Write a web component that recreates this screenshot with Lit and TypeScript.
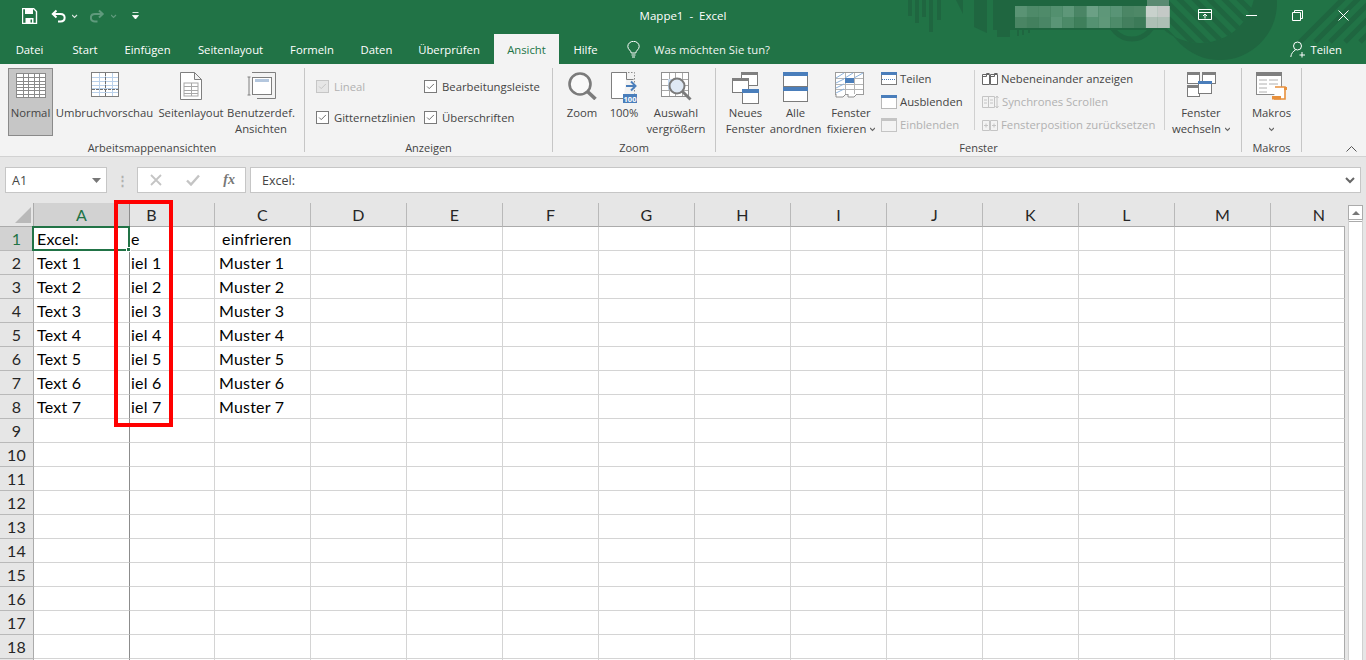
import { LitElement, html, css, svg } from "lit";
import { customElement } from "lit/decorators.js";

const GRAY = "#7b7b7b";
const BLUE = "#4a7ebb";
const DIS = "#c4c4c4";

// draws nx/ny inner lines of a table
const table = (x: number, y: number, w: number, h: number, nx: number, ny: number, c: string) => {
  let d = "";
  for (let i = 1; i < nx; i++) d += `M${x + Math.round((w * i) / nx) + 0.5} ${y}v${h}`;
  for (let i = 1; i < ny; i++) d += `M${x} ${y + Math.round((h * i) / ny) + 0.5}h${w}`;
  return svg`<path d=${d} stroke=${c} fill="none" />`;
};

const win = (x: number, y: number, w: number, h: number, bar: string, bh = 3, stroke = GRAY) => svg`
  <rect x=${x + 0.5} y=${y + 0.5} width=${w - 1} height=${h - 1} fill="#fff" stroke=${stroke} />
  <rect x=${x} y=${y} width=${w} height=${bh} fill=${bar} />`;

const icons = {
  save: html`<svg width="29" height="16" viewBox="0 0 29 16"><path d="M.5.500h11l3 3v12H.5z" fill="none" stroke="#fff" stroke-width="1.400"/><path d="M3 1h8v5H3zM3.500 10h8v6h-8z" fill="#fff"/><path d="M8.500 11.500h1.500v3H8.500z" fill="#217346"/></svg>`,
  undo: html`<svg width="21" height="16" viewBox="0 0 21 16"><path d="M5.500 2.500L1.800 6l3.700 3.500M2 6h7.500c5.500 0 5.500 7.500 0 7.500H7" fill="none" stroke="#fff" stroke-width="2"/></svg>`,
  redo: html`<svg width="21" height="16" viewBox="0 0 21 16"><path d="M9 2.500L12.700 6 9 9.500M12.500 6H5C-.5 6-.5 13.500 5 13.500h2.500" fill="none" stroke="#5f9a7c" stroke-width="2"/></svg>`,
  caretW: (w: number, c: string) => html`<svg width=${w} height="16" viewBox="0 0 ${w} 16"><path d="M0 7l2.500 2.500L5 7" fill="none" stroke=${c} stroke-width="1.200"/></svg>`,
  custom: html`<svg width="14" height="16" viewBox="0 0 14 16"><path d="M1.500 4.500h6M1.500 7.500h6l-3 3.500z" fill="#fff" stroke="#fff" stroke-width=".8"/></svg>`,
  ribbon: html`<svg width="14" height="12" viewBox="0 0 14 12"><path d="M.5.500h13v10H.500zM1 3.500h12M7 9.500V5M5 7l2-2 2 2" fill="none" stroke="#fff"/></svg>`,
  min: html`<svg width="11" height="11" viewBox="0 0 11 11"><path d="M0 5.500h11" stroke="#fff"/></svg>`,
  restore: html`<svg width="11" height="11" viewBox="0 0 11 11"><path d="M.5 2.500h8v8h-8zM2.500 2.500v-2h8v8h-2" fill="none" stroke="#fff"/></svg>`,
  close: html`<svg width="11" height="11" viewBox="0 0 11 11"><path d="M.5.500l10 10M10.500.5l-10 10" stroke="#fff"/></svg>`,
  bulb: html`<svg width="13" height="17" viewBox="0 0 13 17"><path d="M4.200 12c0-2.500-3.400-3.500-3.400-6.500a5.700 5.200 0 0 1 11.400 0c0 3-3.400 4-3.400 6.500zM4.500 14h4M5 16h3" fill="none" stroke="#fff"/></svg>`,
  person: html`<svg width="16" height="17" viewBox="0 0 16 17"><circle cx="7.500" cy="5" r="4" fill="none" stroke="#fff"/><path d="M.8 16c.3-3.500 2.500-6 4.700-7M12 11v5.500M9.500 14h5.500" fill="none" stroke="#fff"/></svg>`,
  normal: html`<svg width="30" height="25" viewBox="0 0 30 25"><rect width="30" height="25" fill="#8a8a8a"/><rect x="1" y="1" width="28" height="23" fill="#fff"/>${table(1, 1, 28, 23, 5, 7, "#8a8a8a")}</svg>`,
  pagebreak: html`<svg width="28" height="25" viewBox="0 0 28 25"><rect x=".5" y=".5" width="27" height="24" fill="#fff" stroke="#7f7f7f"/>${table(1, 1, 26, 23, 4, 6, "#b9d0ea")}<path d="M14.500 1v23M1 17.500h26" stroke="#6f6f6f" stroke-dasharray="3 1" fill="none"/></svg>`,
  page: html`<svg width="22" height="28" viewBox="0 0 22 28"><path d="M.5.500h14l7 7v20H.500zM14.500.5v7h7" fill="#fff" stroke="#7f7f7f"/><rect x="4" y="11" width="14" height="13" fill="#fff" stroke="#a8a8a8"/>${table(4, 11, 14, 13, 2, 4, "#a8a8a8")}</svg>`,
  custom2: html`<svg width="29" height="27" viewBox="0 0 29 27"><path d="M5 .5h23.500v26H10M.500 5h3M.5 23h3M2 5v18" fill="none" stroke="#7f7f7f"/><rect x="5.500" y="5.500" width="19" height="17" fill="#fff" stroke="#7f7f7f"/><rect x="8" y="7" width="14" height="3" fill="#b4c7de"/></svg>`,
  zoom: html`<svg width="29" height="28" viewBox="0 0 29 28"><circle cx="12" cy="12" r="10.500" fill="#fff" fill-opacity=".5" stroke=${GRAY} stroke-width="2.600"/><path d="M19.500 19.500l8 7.500" stroke=${GRAY} stroke-width="3.600"/></svg>`,
  hundred: html`<svg width="27" height="31" viewBox="0 0 27 31"><path d="M16 .5H.5v26h12" fill="#fff" stroke="#7f7f7f"/><path d="M15.500.5v7h7" fill="none" stroke="#7f7f7f"/><path d="M17 .5h6.500v21" fill="none" stroke="#8a8a8a" stroke-dasharray="1.500 1.500"/><path d="M15 14h9M20 9.500l4.500 4.500-4.500 4.500" fill="none" stroke=${BLUE} stroke-width="2"/><rect x="12" y="22" width="14" height="9" fill=${BLUE}/><text x="19" y="29.500" font-size="7.500" font-weight="700" text-anchor="middle" fill="#fff" font-family="Open Sans, sans-serif">100</text></svg>`,
  selzoom: html`<svg width="31" height="29" viewBox="0 0 31 29"><rect x=".5" y=".5" width="27" height="24" fill="#fff" stroke="#8f8f8f"/>${table(1, 1, 26, 23, 4, 4, "#a9a9a9")}<rect x="7" y="7" width="14" height="11" fill="#c6d9ee"/><circle cx="16" cy="14" r="7.500" fill="#dfe9f5" stroke=${GRAY} stroke-width="2"/><path d="M21.500 19.500l8 8" stroke=${GRAY} stroke-width="3"/></svg>`,
  newwin: html`<svg width="28" height="32" viewBox="0 0 28 32">${win(9, 0, 17, 14, "#7f7f7f")}${win(0, 6, 17, 15, "#7f7f7f")}${win(10, 17, 17, 15, BLUE, 4)}</svg>`,
  arrange: html`<svg width="25" height="30" viewBox="0 0 25 30">${win(0, 0, 25, 15, BLUE, 4)}${win(0, 15, 25, 15, BLUE, 4)}</svg>`,
  freeze: html`<svg width="32" height="27" viewBox="0 0 32 27"><rect x=".5" y=".5" width="28" height="22" fill="#fff" stroke="#9c9c9c"/>${table(1, 1, 27, 21, 3, 4, "#b5b5b5")}<path d="M1 6l8-5M10 6l8-5M19 6l9-5M1 11l8-4M1 16l8-4M1 21l8-4" stroke="#8cb2dc" fill="none"/><rect x="10" y="6" width="9" height="5" fill=${BLUE}/><path d="M1 22v3h7l3-3M13 22v3h6l3-3" fill="#fff" stroke="#8f8f8f"/></svg>`,
  split: html`<svg width="16" height="13" viewBox="0 0 16 13"><rect x=".5" y=".5" width="15" height="12" fill="#fff" stroke=${GRAY}/><rect width="16" height="3" fill=${BLUE}/><path d="M1 7.500h14" stroke=${BLUE} stroke-dasharray="1 1"/></svg>`,
  hide: html`<svg width="16" height="14" viewBox="0 0 16 14"><rect x=".5" y=".5" width="15" height="13" fill="#fff" stroke="#777" stroke-dasharray="1 1"/><rect width="16" height="3" fill=${BLUE}/></svg>`,
  unhide: html`<svg width="16" height="14" viewBox="0 0 16 14"><rect x=".5" y=".5" width="15" height="13" fill="#f3f3f3" stroke=${DIS}/><rect width="16" height="3" fill=${DIS}/></svg>`,
  sbs: html`<svg width="16" height="12" viewBox="0 0 16 12"><path d="M.5 1.500h7v10h-7zM8.500 1.500h7v10h-7zM.5 3.500h4V.5h3M8.500 3.500h4V.5h3" fill="#fff" stroke="#666"/></svg>`,
  sync: html`<svg width="17" height="14" viewBox="0 0 17 14"><path d="M.5 1.500h6v11h-6zM6.500 1.500h6v11h-6zM2 5h3M2 8h3M8 5h3M8 8h3M15 1v12M13.500 3L15 1l1.500 2M13.500 11l1.500 2 1.500-2" fill="none" stroke=${DIS}/></svg>`,
  reset: html`<svg width="16" height="12" viewBox="0 0 16 12"><path d="M.5 1.500h7v10h-7zM8.500 1.500h7v10h-7zM2 6.500h4M4 4.500v4M10 6.500h4M12 4.500v4" fill="none" stroke=${DIS}/></svg>`,
  switchwin: html`<svg width="29" height="25" viewBox="0 0 29 25">${win(0, 0, 13, 12, "#7f7f7f")}${win(15, 0, 14, 12, "#7f7f7f")}${win(0, 13, 13, 12, "#7f7f7f")}${win(11, 9, 14, 13, BLUE, 3)}</svg>`,
  macro: html`<svg width="31" height="28" viewBox="0 0 31 28"><rect x=".5" y=".5" width="25" height="22" fill="#fff" stroke="#8a8a8a"/><rect width="26" height="4" fill="#7f7f7f"/><path d="M3 8h8M13 8h9M3 12h8M13 12h9M3 16h8M3 20h8" stroke="#b0b0b0"/><path d="M19 15h10v12h-11" fill="#fff" stroke="#e8903c" stroke-width="1.600"/><path d="M16 24h9v3.500h-9z" fill="#e8903c"/><rect x="28" y="15" width="3" height="3" fill="#e8903c"/></svg>`,
  chevUp: html`<svg width="11" height="6" viewBox="0 0 11 6"><path d="M.5 5.500l5-5 5 5" fill="none" stroke="#555"/></svg>`,
  x: html`<svg width="12" height="12" viewBox="0 0 12 12"><path d="M1 1l10 10M11 1L1 11" stroke="#c4c4c4" stroke-width="1.800"/></svg>`,
  ok: html`<svg width="14" height="12" viewBox="0 0 14 12"><path d="M1 6.500l4 4 8-9" fill="none" stroke="#c4c4c4" stroke-width="2.400"/></svg>`,
};

const TABS: [string, number][] = [
  ["Datei", 53], ["Start", 58], ["Einfügen", 67], ["Seitenlayout", 99],
  ["Formeln", 64], ["Daten", 65], ["Überprüfen", 80],
];

const BLUR = [
  ["#5a9374", "#4e8a69", "#4f8b6a", "#53906f", "#5e9779", "#4a8565", "#6ba085", "#5e9779", "#599476", "#4b8665", "#4e8867", "#c8d1cc", "#c4c9c6"],
  ["#4a8564", "#43805e", "#4a8666", "#5a9576", "#4c8a68", "#3f7f5b", "#559272", "#5f9879", "#4e8b6a", "#437f5e", "#3c7a58", "#adbfb5", "#adbfb5"],
];

const COLS = "ABCDEFGHIJKLMN".split("");
const ROWS = Array.from({ length: 19 }, (_, i) => i + 1);

const cellText = (col: string, row: number) => {
  if (col === "A") return row === 1 ? "Excel:" : row <= 8 ? `Text ${row - 1}` : "";
  if (col === "B") return row === 1 ? "e" : row <= 8 ? `iel ${row - 1}` : "";
  if (col === "C") return row === 1 ? "einfrieren" : row <= 8 ? `Muster ${row - 1}` : "";
  return "";
};

@customElement("app-root")
export class AppRoot extends LitElement {
  static styles = css`
    :host {
      display: flex;
      flex-direction: column;
      position: relative;
      width: 1366px;
      height: 660px;
      overflow: hidden;
      font-family: "Open Sans", "Noto Sans", sans-serif;
      font-size: 11.3px;
      color: #444;
      background: #e6e6e6;
    }
    svg {
      display: block;
      flex: none;
    }

    /* title + tabs */
    .head {
      position: relative;
      height: 64px;
      flex: none;
      background: #217346;
      color: #fff;
      overflow: hidden;
    }
    .pattern {
      position: absolute;
      left: 0;
      top: 0;
    }
    .titlerow {
      position: relative;
      display: grid;
      grid-template-columns: 1fr auto 1fr;
      height: 34px;
    }
    .qat {
      display: flex;
      align-items: center;
      height: 32px;
      padding-left: 22px;
    }
    .title {
      line-height: 32px;
      font-size: 11.5px;
      white-space: pre;
    }
    .winbtns {
      display: flex;
      justify-content: flex-end;
    }
    .winbtn {
      width: 46px;
      height: 30px;
      display: flex;
      align-items: center;
      justify-content: center;
    }
    .tabs {
      position: relative;
      display: flex;
      height: 30px;
      padding-left: 3px;
    }
    .tab {
      display: flex;
      align-items: center;
      justify-content: center;
      flex: none;
    }
    .tab.active {
      width: 65px;
      margin-left: 5px;
      background: #f3f3f3;
      color: #217346;
    }
    .tab.help {
      width: 53px;
    }
    .tell {
      display: flex;
      align-items: center;
      gap: 14px;
      margin-left: 15px;
      color: #f0f5f2;
    }
    .share {
      margin-left: auto;
      display: flex;
      align-items: center;
      gap: 4px;
      padding-right: 24px;
    }

    /* ribbon */
    .ribbon {
      display: flex;
      height: 93px;
      flex: none;
      box-sizing: border-box;
      padding-top: 4px;
      background: #f3f3f3;
      border-bottom: 1px solid #d2d2d2;
    }
    .group {
      position: relative;
      display: flex;
      flex-direction: column;
      box-sizing: border-box;
      flex: none;
      height: 88px;
    }
    .group::after {
      content: "";
      position: absolute;
      right: 0;
      top: 0;
      width: 1px;
      height: 84px;
      background: #c6c6c6;
    }
    .g-views { width: 305px; }
    .g-views .gbody { padding-left: 8px; }
    .g-show { width: 248px; }
    .g-zoom { width: 163px; }
    .g-win { width: 526px; }
    .g-win .gbody { padding-left: 6px; }
    .g-mac { width: 60px; }
    .gbody {
      display: flex;
      height: 68px;
    }
    .glabel {
      height: 20px;
      padding: 4px 1px 0 0;
      box-sizing: border-box;
      line-height: 16px;
      font-size: 11px;
      text-align: center;
      white-space: nowrap;
    }
    .big {
      display: flex;
      flex-direction: column;
      align-items: center;
      flex: none;
      box-sizing: border-box;
      height: 68px;
      line-height: 16px;
      white-space: nowrap;
    }
    .big.on {
      background: #c6c6c6;
      border: 1px solid #8a8a8a;
    }
    .big.on .ic {
      height: 36px;
    }
    .ic {
      height: 37px;
      box-sizing: border-box;
      padding-top: 4px;
      flex: none;
    }
    .line {
      display: flex;
      align-items: center;
      gap: 4px;
      height: 16px;
    }
    .checks {
      display: grid;
      grid-template-columns: 108px auto;
      grid-auto-rows: 31px;
      padding: 3px 0 0 11px;
    }
    .check {
      display: flex;
      align-items: center;
      gap: 5px;
      white-space: nowrap;
    }
    .box {
      width: 13px;
      height: 13px;
      flex: none;
      box-sizing: border-box;
      border: 1px solid #7a7a7a;
      background: #fff;
    }
    .dis {
      color: #b1b1b1;
    }
    .dis .box {
      border-color: #c6c6c6;
      background: #e6e6e6;
    }
    .smalls {
      display: flex;
      flex-direction: column;
      flex: none;
      box-sizing: border-box;
      margin-top: -1px;
    }
    .smalls.first {
      width: 94px;
      padding-left: 1px;
    }
    .smalls.second {
      width: 189px;
      padding-left: 7px;
    }
    .small {
      display: flex;
      align-items: center;
      gap: 3px;
      height: 23px;
      white-space: nowrap;
    }
    .smallsep {
      width: 1px;
      height: 60px;
      margin-top: 2px;
      background: #d0d0d0;
      flex: none;
    }
    .collapse {
      margin-left: auto;
      align-self: flex-end;
      padding: 0 9px 4px 0;
    }

    /* formula bar */
    .fbar {
      display: flex;
      align-items: center;
      flex: none;
      height: 46px;
      box-sizing: border-box;
      padding: 0 5px;
      background: #e6e6e6;
      font-size: 12.5px;
    }
    .fbox {
      display: flex;
      align-items: center;
      box-sizing: border-box;
      height: 26px;
      background: #fff;
      border: 1px solid #c6c6c6;
    }
    .name {
      width: 102px;
      padding: 0 5px 0 6px;
      justify-content: space-between;
    }
    .grip {
      width: 30px;
      text-align: center;
      color: #b0b0b0;
      font-weight: 700;
    }
    .fn {
      width: 109px;
      justify-content: space-between;
      padding: 0 10px 0 12px;
    }
    .fx {
      font-family: "Liberation Serif", serif;
      font-style: italic;
      font-weight: 700;
      color: #777;
      font-size: 14px;
    }
    .input {
      flex: 1;
      margin-left: 4px;
      padding: 0 5px 0 11px;
      justify-content: space-between;
    }

    /* sheet */
    .sheet {
      display: flex;
      flex: 1;
      min-height: 0;
      overflow: hidden;
    }
    .grid {
      display: grid;
      grid-template-columns: 34px 96px 85px repeat(11, 96px) 74px;
      grid-auto-rows: 24px;
      flex: none;
      width: 1345px;
      align-content: start;
      font-family: Lato, "Open Sans", sans-serif;
      font-size: 16px;
      letter-spacing: 0.2px;
      color: #000;
      background: #fff;
    }
    .corner {
      position: relative;
      background: #e6e6e6;
      border-right: 1px solid #ababab;
      border-bottom: 1px solid #ababab;
    }
    .corner svg {
      position: absolute;
      left: 15px;
      top: 4px;
    }
    .ch {
      display: flex;
      align-items: center;
      justify-content: center;
      background: #e6e6e6;
      box-sizing: border-box;
      border-right: 1px solid #b9b9b9;
      border-bottom: 1px solid #ababab;
      color: #262626;
      overflow: hidden;
    }
    .ch.sel {
      background: #d2d2d2;
      color: #217346;
      border-right-color: #8c8c8c;
    }
    .ch.shift {
      padding-right: 41px;
    }
    .ch.last {
      border-right: 0;
      justify-content: flex-start;
    }
    .ch.last span {
      width: 96px;
      flex: none;
      text-align: center;
    }
    .rh {
      display: flex;
      align-items: center;
      justify-content: center;
      box-sizing: border-box;
      background: #e6e6e6;
      border-right: 1px solid #ababab;
      border-bottom: 1px solid #b9b9b9;
      color: #262626;
    }
    .rh.sel {
      background: #d2d2d2;
      color: #217346;
    }
    .c {
      box-sizing: border-box;
      border-right: 1px solid #d4d4d4;
      border-bottom: 1px solid #d4d4d4;
      padding-left: 3px;
      line-height: 24px;
      white-space: pre;
      overflow: hidden;
    }
    .c.frozen {
      border-right-color: #8c8c8c;
    }
    .c.b {
      padding-left: 1px;
    }
    .c.m {
      padding-left: 4px;
    }
    .c.last {
      border-right-color: #ababab;
    }
    .c.c1 {
      padding-left: 7px;
    }
    .scroll {
      flex: 1;
      padding: 2px 3px 0 3px;
    }
    .track {
      height: 100%;
      background: #fff;
      border-left: 1px solid #d0d0d0;
      border-right: 1px solid #d0d0d0;
    }
    .up {
      height: 15px;
      box-sizing: border-box;
      background: #fff;
      border: 1px solid #ababab;
      margin: 0 -1px;
      display: flex;
      align-items: center;
      justify-content: center;
    }
    .thumb {
      margin-top: 1px;
      border-top: 1px solid #ababab;
    }

    /* overlays */
    .cursor {
      position: absolute;
      left: 32px;
      top: 226px;
      width: 98px;
      height: 25px;
      box-sizing: border-box;
      border: 2px solid #217346;
    }
    .cursor::after {
      content: "";
      position: absolute;
      right: -3px;
      bottom: -3px;
      width: 5px;
      height: 5px;
      background: #217346;
      border: 1px solid #fff;
      box-sizing: border-box;
    }
    .mark {
      position: absolute;
      left: 114px;
      top: 200px;
      width: 59px;
      height: 227px;
      box-sizing: border-box;
      border: 4px solid #ff0000;
    }
  `;

  private big(w: number, icon: unknown, l1: string, l2?: unknown, on = false) {
    return html`<div class="big ${on ? "on" : ""}" style="width:${w}px">
      <div class="ic">${icon}</div>
      <div class="line">${l1}</div>
      ${l2 ? html`<div class="line">${l2}</div>` : ""}
    </div>`;
  }

  private check(label: string, dis = false) {
    return html`<div class="check ${dis ? "dis" : ""}">
      <svg class="box" viewBox="0 0 13 13"><path d="M2.500 6.500l2.500 2.500 5.500-5.500" fill="none" stroke=${dis ? "#c0c0c0" : "#555"}/></svg>
      ${label}
    </div>`;
  }

  private small(icon: unknown, label: string, dis = false) {
    return html`<div class="small ${dis ? "dis" : ""}">${icon}<span>${label}</span></div>`;
  }

  private pattern() {
    const bars = [[908, 16], [915, 23], [922, 17], [929, 32], [937, 20]];
    const dark = "#1f6640";
    const base = "#217346";
    let stripes = "";
    for (let i = 0; i < 8; i++) stripes += `M${1130 + i * 15} -5l70 70`;
    let right = "";
    for (let i = 0; i < 5; i++) right += `M${1300 + i * 15} 42l48 -48`;
    return svg`<svg class="pattern" width="1366" height="64" viewBox="0 0 1366 64">
      <defs><clipPath id="inner"><circle cx="1200" cy="-12" r="55" /></clipPath></defs>
      ${bars.map(([x, h]) => svg`<rect x=${x} y="0" width="4" height=${h} fill=${dark} />`)}
      <path d="M956 0h7v14zM974 0h13v33l-13-6zM993 0h180v30h-180zM997 30h13v7h-13z" fill=${dark} />
      <path d="M1017 30h2v6h-2zM1022 30h2v5h-2zM1028 30h2v3h-2z" fill=${dark} />
      <circle cx="1132" cy="16" r="23" fill="none" stroke=${dark} stroke-width="5" />
      <circle cx="1220" cy="3" r="57" fill=${dark} />
      <circle cx="1200" cy="-12" r="55" fill=${base} />
      <path d=${stripes} stroke=${dark} stroke-width="5" fill="none" clip-path="url(#inner)" />
      <path d=${right} stroke=${dark} stroke-width="5" fill="none" />
      ${BLUR.map((row, r) => row.map((c, i) => svg`<rect x=${1015 + i * 11.9} y=${6 + r * 11} width="12" height="11" fill=${c} />`))}
      <rect x="1147" y="0" width="22" height="6" fill="#5b8a72" />
    </svg>`;
  }

  private cell(col: string, row: number) {
    const cls = ["c"];
    if (col === "A") cls.push("frozen");
    if (col === "B") cls.push("b");
    if (col === "C") cls.push(row === 1 ? "c1" : "m");
    if (col === "N") cls.push("last");
    return html`<div class=${cls.join(" ")}>${cellText(col, row)}</div>`;
  }

  render() {
    return html`
      <div class="head">
        ${this.pattern()}
        <div class="titlerow">
          <div class="qat">
            ${icons.save}${icons.undo}${icons.caretW(18, "#d8e6de")}${icons.redo}${icons.caretW(20, "#5f9a7c")}${icons.custom}
          </div>
          <div class="title">Mappe1  -  Excel</div>
          <div class="winbtns">
            <div class="winbtn">${icons.ribbon}</div>
            <div class="winbtn">${icons.min}</div>
            <div class="winbtn">${icons.restore}</div>
            <div class="winbtn">${icons.close}</div>
          </div>
        </div>
        <div class="tabs">
          ${TABS.map(([t, w]) => html`<div class="tab" style="width:${w}px">${t}</div>`)}
          <div class="tab active">Ansicht</div>
          <div class="tab help">Hilfe</div>
          <div class="tell">${icons.bulb}<span>Was möchten Sie tun?</span></div>
          <div class="share">${icons.person}<span>Teilen</span></div>
        </div>
      </div>

      <div class="ribbon">
        <div class="group g-views">
          <div class="gbody">
            ${this.big(45, icons.normal, "Normal", undefined, true)}
            ${this.big(103, icons.pagebreak, "Umbruchvorschau")}
            ${this.big(70, icons.page, "Seitenlayout")}
            ${this.big(70, icons.custom2, "Benutzerdef.", "Ansichten")}
          </div>
          <div class="glabel">Arbeitsmappenansichten</div>
        </div>
        <div class="group g-show">
          <div class="gbody">
            <div class="checks">
              ${this.check("Lineal", true)}${this.check("Bearbeitungsleiste")}
              ${this.check("Gitternetzlinien")}${this.check("Überschriften")}
            </div>
          </div>
          <div class="glabel">Anzeigen</div>
        </div>
        <div class="group g-zoom">
          <div class="gbody">
            ${this.big(58, icons.zoom, "Zoom")}
            ${this.big(26, icons.hundred, "100%")}
            ${this.big(78, icons.selzoom, "Auswahl", "vergrößern")}
          </div>
          <div class="glabel">Zoom</div>
        </div>
        <div class="group g-win">
          <div class="gbody">
            ${this.big(47, icons.newwin, "Neues", "Fenster")}
            ${this.big(53, icons.arrange, "Alle", "anordnen")}
            ${this.big(58, icons.freeze, "Fenster", html`fixieren ${icons.caretW(5, "#666")}`)}
            <div class="smalls first">
              ${this.small(icons.split, "Teilen")}
              ${this.small(icons.hide, "Ausblenden")}
              ${this.small(icons.unhide, "Einblenden", true)}
            </div>
            <div class="smallsep"></div>
            <div class="smalls second">
              ${this.small(icons.sbs, "Nebeneinander anzeigen")}
              ${this.small(icons.sync, "Synchrones Scrollen", true)}
              ${this.small(icons.reset, "Fensterposition zurücksetzen", true)}
            </div>
            <div class="smallsep"></div>
            ${this.big(72, icons.switchwin, "Fenster", html`wechseln ${icons.caretW(5, "#666")}`)}
          </div>
          <div class="glabel">Fenster</div>
        </div>
        <div class="group g-mac">
          <div class="gbody">
            ${this.big(59, icons.macro, "Makros", icons.caretW(5, "#666"))}
          </div>
          <div class="glabel">Makros</div>
        </div>
        <div class="collapse">${icons.chevUp}</div>
      </div>

      <div class="fbar">
        <div class="fbox name">
          <span>A1</span>
          <svg width="9" height="5" viewBox="0 0 9 5"><path d="M0 0h9L4.500 5z" fill="#777"/></svg>
        </div>
        <div class="grip">⋮</div>
        <div class="fbox fn">
          ${icons.x}${icons.ok}<span class="fx">fx</span>
        </div>
        <div class="fbox input">
          <span>Excel:</span>
          <svg width="10" height="7" viewBox="0 0 10 7"><path d="M1 1l4 4 4-4" fill="none" stroke="#666" stroke-width="2"/></svg>
        </div>
      </div>

      <div class="sheet">
        <div class="grid">
          <div class="corner">
            <svg width="16" height="16" viewBox="0 0 16 16"><path d="M16 0v16H0z" fill="#b9b9b9"/></svg>
          </div>
          ${COLS.map(
            (c) => html`<div class="ch ${c === "A" ? "sel" : ""} ${c === "B" ? "shift" : ""} ${c === "N" ? "last" : ""}"><span>${c}</span></div>`
          )}
          ${ROWS.map(
            (r) => html`
              <div class="rh ${r === 1 ? "sel" : ""}">${r <= 18 ? r : ""}</div>
              ${COLS.map((c) => this.cell(c, r))}
            `
          )}
        </div>
        <div class="scroll">
          <div class="track">
            <div class="up">
              <svg width="8" height="4" viewBox="0 0 8 4"><path d="M4 0l4 4H0z" fill="#777"/></svg>
            </div>
            <div class="thumb"></div>
          </div>
        </div>
      </div>

      <div class="cursor"></div>
      <div class="mark"></div>
    `;
  }
}
